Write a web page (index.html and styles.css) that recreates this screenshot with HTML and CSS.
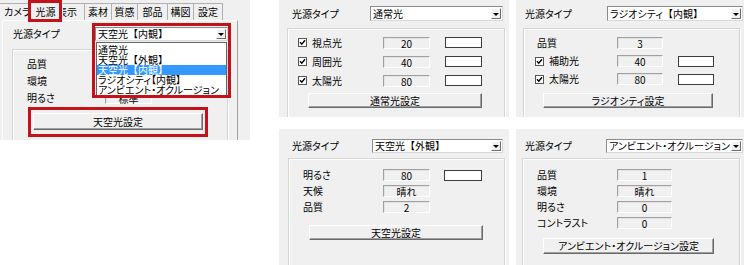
FILE: index.html
```html
<!DOCTYPE html>
<html lang="ja">
<head>
  <meta charset="UTF-8">
  <title>光源設定</title>
  <link rel="stylesheet" href="styles.css">
</head>
<body>
  <div class="win">
    <div class="tabs">
      <div class="tab first">カメラ</div>
      <div class="tab on">光源</div>
      <div class="tab under">表示</div>
      <div class="tab w27">素材</div>
      <div class="tab w26">質感</div>
      <div class="tab w30">部品</div>
      <div class="tab w26">構図</div>
      <div class="tab w30">設定</div>
    </div>
    <div class="pane">
      <div class="head">
        <span class="lbl">光源タイプ</span>
        <div class="combo"><span>天空光<span class="br">【内観】</span></span><i class="arrow"></i></div>
      </div>
      <div class="grp g-win">
        <div class="row"><span class="lab">品質</span><span class="fld">3</span></div>
        <div class="row"><span class="lab">環境</span><span class="fld">晴れ</span></div>
        <div class="row"><span class="lab">明るさ</span><span class="fld">標準</span></div>
        <div class="btn">天空光設定</div>
      </div>
    </div>

    <ul class="list">
      <li>通常光</li>
      <li>天空光<span class="br">【外観】</span></li>
      <li class="sel">天空光<span class="br">【内観】</span></li>
      <li>ラジオシティ【内観】</li>
      <li>アンビエント・オクルージョン</li>
    </ul>
    <div class="mark m-tab"></div>
    <div class="mark m-combo"></div>
    <div class="mark m-btn"></div>
  </div>

  <div class="panels">
    <div class="panel p-a">
      <div class="head">
        <span class="lbl">光源タイプ</span>
        <div class="combo"><span>通常光</span><i class="arrow"></i></div>
      </div>
      <div class="grp">
        <div class="row"><span class="lab"><svg class="chk" viewBox="0 0 9 9"><rect x="0.5" y="0.5" width="8" height="8" fill="#fff" stroke="#555"/><path d="M2 4.2l1.8 2L7 2.2" fill="none" stroke="#000" stroke-width="1.4"/></svg>視点光</span><span class="fld">20</span><span class="clr"></span></div>
        <div class="row"><span class="lab"><svg class="chk" viewBox="0 0 9 9"><rect x="0.5" y="0.5" width="8" height="8" fill="#fff" stroke="#555"/><path d="M2 4.2l1.8 2L7 2.2" fill="none" stroke="#000" stroke-width="1.4"/></svg>周囲光</span><span class="fld">40</span><span class="clr"></span></div>
        <div class="row"><span class="lab"><svg class="chk" viewBox="0 0 9 9"><rect x="0.5" y="0.5" width="8" height="8" fill="#fff" stroke="#555"/><path d="M2 4.2l1.8 2L7 2.2" fill="none" stroke="#000" stroke-width="1.4"/></svg>太陽光</span><span class="fld">80</span><span class="clr"></span></div>
        <div class="btn">通常光設定</div>
      </div>
    </div>

    <div class="panel p-b">
      <div class="head">
        <span class="lbl">光源タイプ</span>
        <div class="combo"><span>ラジオシティ<span class="br">【内観】</span></span><i class="arrow"></i></div>
      </div>
      <div class="grp">
        <div class="row"><span class="lab plain">品質</span><span class="fld">3</span></div>
        <div class="row"><span class="lab"><svg class="chk" viewBox="0 0 9 9"><rect x="0.5" y="0.5" width="8" height="8" fill="#fff" stroke="#555"/><path d="M2 4.2l1.8 2L7 2.2" fill="none" stroke="#000" stroke-width="1.4"/></svg>補助光</span><span class="fld">40</span><span class="clr"></span></div>
        <div class="row"><span class="lab"><svg class="chk" viewBox="0 0 9 9"><rect x="0.5" y="0.5" width="8" height="8" fill="#fff" stroke="#555"/><path d="M2 4.2l1.8 2L7 2.2" fill="none" stroke="#000" stroke-width="1.4"/></svg>太陽光</span><span class="fld">80</span><span class="clr"></span></div>
        <div class="btn">ラジオシティ設定</div>
      </div>
    </div>

    <div class="panel p-c">
      <div class="head">
        <span class="lbl">光源タイプ</span>
        <div class="combo"><span>天空光<span class="br">【外観】</span></span><i class="arrow"></i></div>
      </div>
      <div class="grp">
        <div class="row"><span class="lab">明るさ</span><span class="fld">80</span><span class="clr"></span></div>
        <div class="row"><span class="lab">天候</span><span class="fld">晴れ</span></div>
        <div class="row"><span class="lab">品質</span><span class="fld">2</span></div>
        <div class="btn">天空光設定</div>
      </div>
    </div>

    <div class="panel p-d">
      <div class="head">
        <span class="lbl">光源タイプ</span>
        <div class="combo"><span>アンビエント・オクルージョン</span><i class="arrow"></i></div>
      </div>
      <div class="grp">
        <div class="row"><span class="lab">品質</span><span class="fld">1</span></div>
        <div class="row"><span class="lab">環境</span><span class="fld">晴れ</span></div>
        <div class="row"><span class="lab">明るさ</span><span class="fld">0</span></div>
        <div class="row"><span class="lab">コントラスト</span><span class="fld">0</span></div>
        <div class="btn">アンビエント・オクルージョン設定</div>
      </div>
    </div>
  </div>
</body>
</html>
```

FILE: styles.css
```css
*{box-sizing:border-box;margin:0;padding:0;}
body{
  width:744px;
  height:265px;
  overflow:hidden;
  display:flex;
  align-items:flex-start;
  background:#fff;
  color:#000;
  font:10px/1 "Noto Sans CJK JP","Noto Sans",sans-serif;
  font-feature-settings:"palt";
}
.br{font-feature-settings:normal;}

/* left window */
.win{position:relative;flex:none;width:250px;height:140px;background:#f0f0f0;overflow:hidden;}
.tabs{display:flex;height:20px;padding-top:3px;}
.tab{
  flex:none;
  width:22px;
  height:17px;
  line-height:16px;
  text-align:center;
  border:1px solid #b0b0b0;
  border-bottom:none;
  border-right:none;
  white-space:nowrap;
  overflow:hidden;
}
.tab:last-child{border-right:1px solid #b0b0b0;}
.tab.first{width:28px;border-left:none;text-align:left;padding-left:4px;}
.tab.on{width:34px;height:19px;margin-top:-2px;line-height:19px;border-color:#fff;}
.tab.under{text-align:left;text-indent:-6px;border-left-color:#f0f0f0;}
.tab.w26{width:26px;}
.tab.w27{width:27px;}
.tab.w30{width:30px;}
.pane{
  margin:0 12px 0 2px;
  height:120px;
  padding-top:6px;
  border-top:1px solid #fff;
  border-left:1px solid #fff;
  border-right:1px solid #a0a0a0;
}
.pane .head{padding-left:10px;}
.pane .lbl{width:82px;}
.pane .combo{width:133px;height:14px;}

/* shared controls */
.head{display:flex;align-items:center;}
.lbl{flex:none;}
.combo{
  display:flex;
  align-items:center;
  justify-content:space-between;
  background:#fff;
  border:1px solid;
  border-color:#8a8a8a #d8d8d8 #d8d8d8 #8a8a8a;
  padding-left:2px;
  white-space:nowrap;
  overflow:hidden;
}
.arrow{
  flex:none;
  position:relative;
  width:10px;
  height:calc(100% - 2px);
  margin-right:1px;
  background:#f0f0f0;
  border:1px solid;
  border-color:#fff #6d6d6d #6d6d6d #fff;
}
.arrow::after{
  content:"";
  position:absolute;
  left:1px;
  top:50%;
  margin-top:-1px;
  border:3px solid transparent;
  border-top:3px solid #000;
  border-bottom:none;
}
.grp{
  border:1px solid #d5d5d5;
  box-shadow:inset 1px 1px #fff,1px 1px #fff;
  height:220px;
}
.row{display:flex;align-items:center;}
.lab{flex:none;display:flex;align-items:center;white-space:nowrap;}
.lab.plain{padding-left:2px;}
.chk{width:9px;height:9px;margin-right:5px;flex:none;}
.fld{
  flex:none;
  height:12px;
  line-height:11px;
  text-align:center;
  background:#f0f0f0;
  border:1px solid;
  border-color:#a0a0a0 #fff #fff #a0a0a0;
  box-shadow:1px 1px 0 #e3e3e3 inset;
}
.clr{flex:none;height:11px;background:#fff;border:1px solid #3c3c3c;}
.btn{
  display:flex;
  align-items:center;
  justify-content:center;
  height:15px;
  background:#f0f0f0;
  border:1px solid;
  border-color:#fff #696969 #696969 #fff;
  box-shadow:inset -1px -1px #a0a0a0;
  white-space:nowrap;
}

/* left window group */
.g-win{margin:8px 0 0 9px;width:216px;padding:5px 0 0 14px;}
.g-win .row{height:17px;}
.g-win .lab{width:78px;}
.g-win .fld{width:47px;}
.g-win .btn{margin:7px 0 0 6px;width:170px;height:17px;}

/* dropdown list and red marks lie over the window */
.list{
  position:absolute;
  left:96px;
  top:42px;
  width:131px;
  height:54px;
  padding-top:2px;
  list-style:none;
  background:#fff;
  border:1px solid #646464;
}
.list li{height:10px;line-height:10px;padding-left:1px;white-space:nowrap;}
.list li.sel{background:#3399ff;color:#fff;}
.mark{position:absolute;border:3px solid #c4121a;}
.m-tab{left:28px;top:0;width:34px;height:22px;}
.m-combo{left:92px;top:23px;width:139px;height:75px;}
.m-btn{left:28px;top:107px;width:180px;height:30px;}

/* right panels */
.panels{
  display:grid;
  grid-template-columns:230px 228px;
  grid-template-rows:117px 136px;
  column-gap:7px;
  row-gap:12px;
  margin-left:29px;
}
.panel{background:#f0f0f0;overflow:hidden;}

.p-a .head{padding:6px 0 0 13px;}
.p-a .lbl{width:78px;}
.p-a .combo{width:133px;height:15px;}
.p-a .grp{margin:7px 0 0 8px;width:218px;padding:4px 0 0 10px;}
.p-a .row{height:19px;}
.p-a .lab{width:85px;}
.p-a .fld{width:47px;}
.p-a .clr{margin-left:15px;width:37px;}
.p-a .btn{margin:3px 0 0 10px;width:174px;}

.p-b .head{padding:6px 0 0 9px;}
.p-b .lbl{width:82px;}
.p-b .combo{width:136px;height:15px;}
.p-b .grp{margin:7px 0 0 7px;width:217px;padding:5px 0 0 11px;}
.p-b .row{height:18px;}
.p-b .lab{width:82px;}
.p-b .fld{width:46px;}
.p-b .clr{margin-left:15px;width:36px;}
.p-b .btn{margin:5px 0 0 8px;width:170px;}

.p-c .head{padding:10px 0 0 13px;}
.p-c .lbl{width:80px;}
.p-c .combo{width:131px;height:14px;}
.p-c .grp{margin:5px 0 0 9px;width:217px;padding:8px 0 0 14px;}
.p-c .row{height:16px;}
.p-c .lab{width:80px;}
.p-c .fld{width:47px;}
.p-c .clr{margin-left:14px;width:38px;}
.p-c .btn{margin:10px 0 0 6px;width:174px;}

.p-d .head{padding:10px 0 0 9px;}
.p-d .lbl{width:81px;}
.p-d .combo{width:137px;height:14px;}
.p-d .grp{margin:5px 0 0 6px;width:218px;padding:8px 0 0 14px;}
.p-d .row{height:16px;}
.p-d .lab{width:80px;}
.p-d .fld{width:55px;}
.p-d .btn{margin:7px 0 0 6px;width:171px;height:16px;}
```
